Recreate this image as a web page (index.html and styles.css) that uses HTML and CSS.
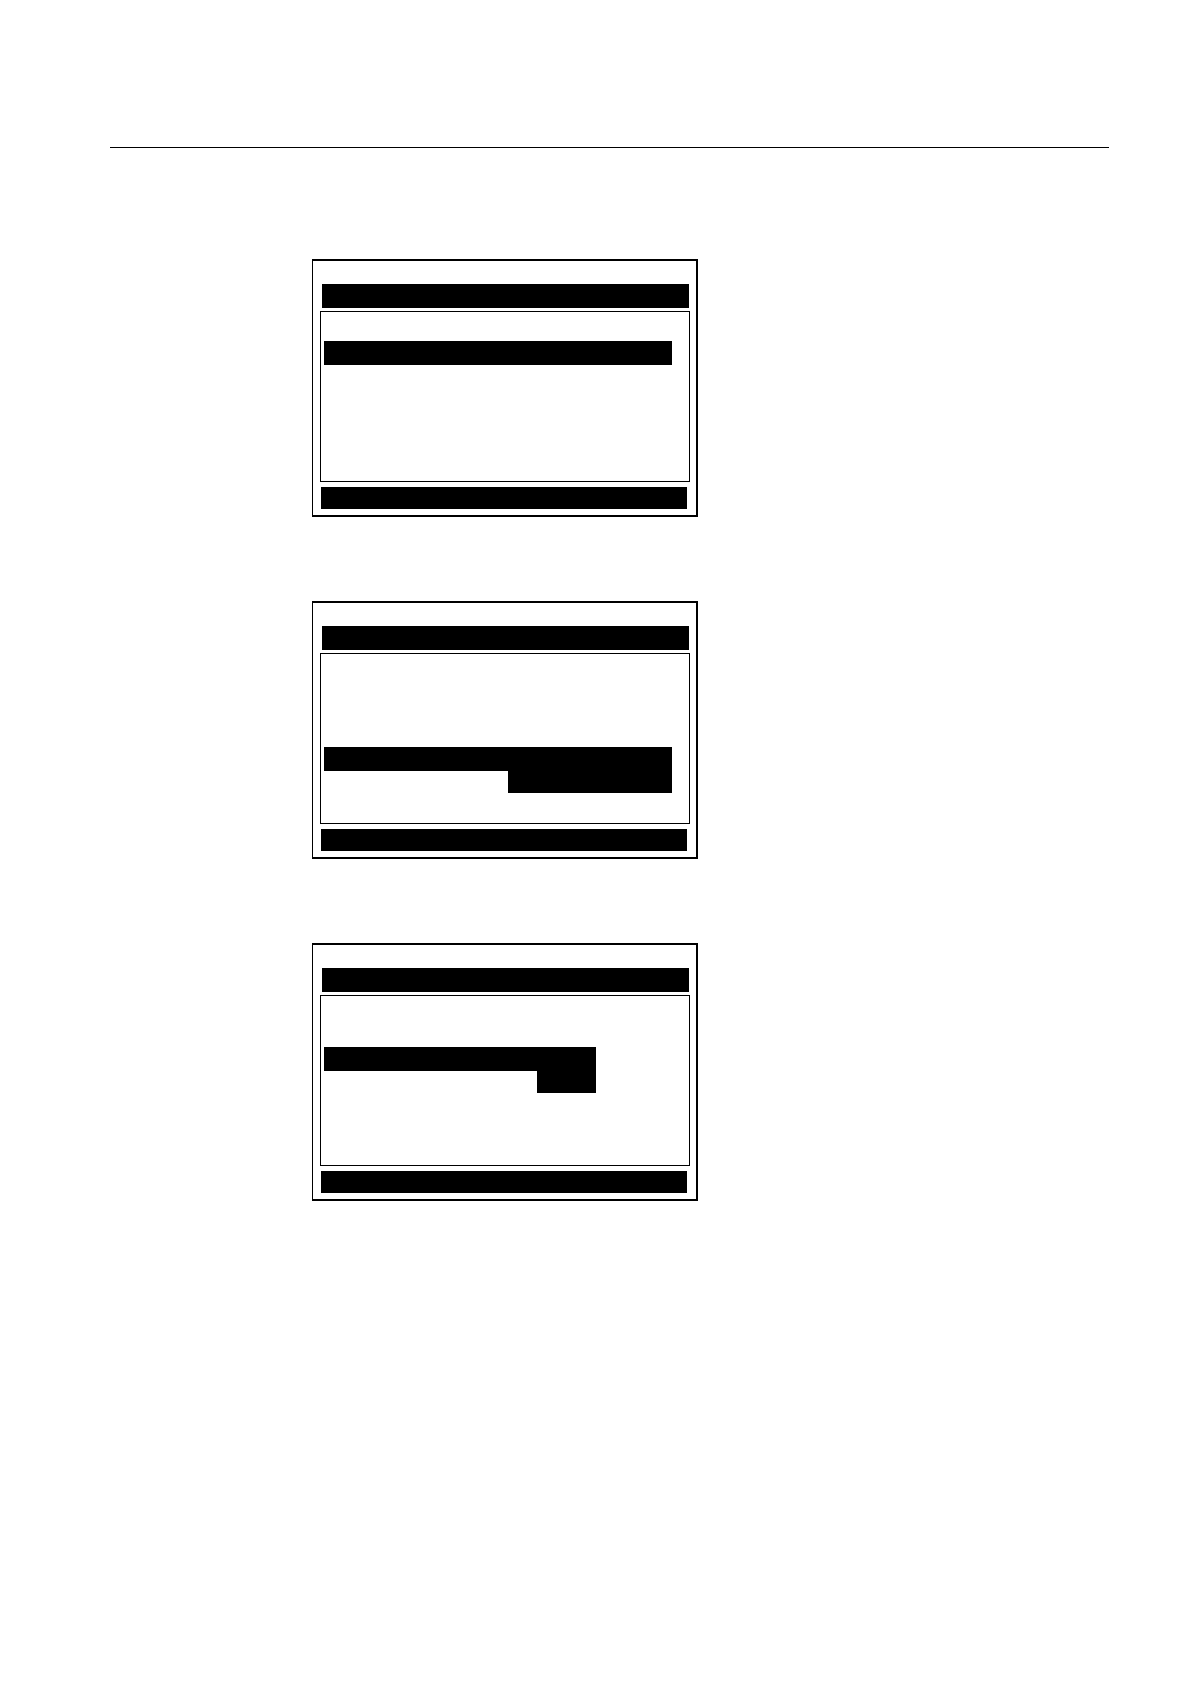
FILE: index.html
```html
<!DOCTYPE html>
<html lang="en">
<head>
    <meta charset="UTF-8">
    <meta name="viewport" content="width=device-width, initial-scale=1.0">
    <link rel="stylesheet" href="styles.css">
    <title>Display Menus</title>
</head>
<body>
    <header class="page-header"></header>

    <main class="screens">
        <section class="screen">
            <div class="title-bar"></div>
            <div class="menu menu-top">
                <div class="selected"></div>
            </div>
            <div class="status-bar"></div>
        </section>

        <section class="screen">
            <div class="title-bar"></div>
            <div class="menu menu-low">
                <div class="selected"></div>
                <div class="value value-wide"></div>
            </div>
            <div class="status-bar"></div>
        </section>

        <section class="screen">
            <div class="title-bar"></div>
            <div class="menu menu-middle">
                <div class="selected"></div>
                <div class="value value-narrow"></div>
            </div>
            <div class="status-bar"></div>
        </section>
    </main>
</body>
</html>
```

FILE: styles.css
```css
* {
    box-sizing: border-box;
}

body {
    margin: 0;
    padding: 147px 81px 80px 110px;
    background-color: #fff;
    font-family: "Liberation Sans", Arial, sans-serif;
}

.page-header {
    border-top: 1px solid #000;
}

.screens {
    display: flex;
    flex-direction: column;
    gap: 84px;
    margin-top: 111px;
    padding-left: 202px;
}

/* Device display */
.screen {
    width: 100%;
    max-width: 386px;
    padding: 23px 6px 6px 7px;
    border: 2px solid #000;
    border-left-width: 1px;
}

.title-bar {
    height: 24px;
    margin: 0 1px 3px 2px;
    background-color: #000;
}

.menu {
    display: flex;
    flex-direction: column;
    min-height: 171px;
    padding-left: 3px;
    padding-right: 17px;
    border: 1px solid #000;
}

.menu-top {
    padding-top: 29px;
}

.menu-low {
    padding-top: 93px;
}

.menu-middle {
    padding-top: 51px;
    padding-right: 93px;
}

.selected {
    height: 24px;
    background-color: #000;
}

/* Second line of the selected entry */
.value {
    align-self: flex-end;
    height: 22px;
    background-color: #000;
}

.value-wide {
    width: 164px;
}

.value-narrow {
    width: 59px;
}

.status-bar {
    height: 22px;
    margin: 5px 3px 0 1px;
    background-color: #000;
}
```
